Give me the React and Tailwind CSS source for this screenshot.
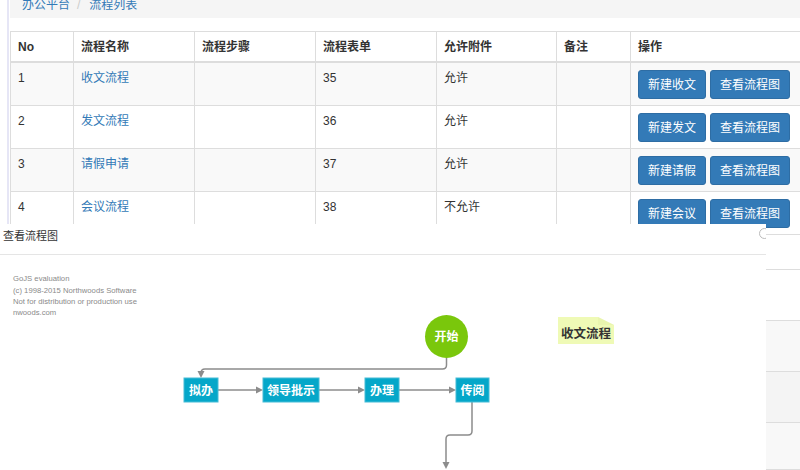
import React from "react";

const cols = [63, 121, 121, 121, 120, 74, 230];

const rows = [
  { no: "1", name: "收文流程", form: "35", att: "允许", btn: "新建收文" },
  { no: "2", name: "发文流程", form: "36", att: "允许", btn: "新建发文" },
  { no: "3", name: "请假申请", form: "37", att: "允许", btn: "新建请假" },
  { no: "4", name: "会议流程", form: "38", att: "不允许", btn: "新建会议" },
];

const extra = [
  { h: "h-[35px]", bg: "bg-white" },
  { h: "h-[51px]", bg: "bg-white" },
  { h: "h-[51px]", bg: "bg-[#f8f8f8]" },
  { h: "h-[51px]", bg: "bg-[#f4f4f4]" },
  { h: "h-[47px]", bg: "bg-[#f8f8f8]" },
];

function Cell({ i, children, className = "" }) {
  return (
    <div
      style={{ width: cols[i] }}
      className={`shrink-0 border-r border-[#ddd] px-[7px] pt-[7px] leading-[17px] ${className}`}
    >
      {children}
    </div>
  );
}

function Btn({ children }) {
  return (
    <button className="h-[29px] px-[9px] pt-[1px] rounded-[3px] border border-[#2e6da4] bg-[#337ab7] text-white text-[12px] leading-[17px] whitespace-nowrap">
      {children}
    </button>
  );
}

function Diagram() {
  const font = "'Noto Sans CJK SC', 'Liberation Sans', sans-serif";
  const grey = "#8c8c8c";
  const arrow = (x, y, dir) => {
    if (dir === "right")
      return <polygon points={`${x},${y} ${x - 7},${y - 3.5} ${x - 7},${y + 3.5}`} fill={grey} />;
    return <polygon points={`${x},${y} ${x - 3.5},${y - 7} ${x + 3.5},${y - 7}`} fill={grey} />;
  };
  const box = (x1, x2, label) => (
    <g key={label}>
      <rect x={x1} y={378} width={x2 - x1} height={24} fill="#05a7c9" stroke="#46bcd6" strokeWidth="1" />
      <text x={(x1 + x2) / 2} y={394.5} textAnchor="middle" fill="#fff" fontSize="12" fontWeight="700" fontFamily={font}>
        {label}
      </text>
    </g>
  );
  return (
    <svg width="766" height="215" viewBox="0 255 766 215" className="block">
      <g fontFamily="'Liberation Sans', Arial, sans-serif" fontSize="7.7" fill="#8a8a8a">
        <text x="13" y="281">GoJS evaluation</text>
        <text x="13" y="292.5">(c) 1998-2015 Northwoods Software</text>
        <text x="13" y="304">Not for distribution or production use</text>
        <text x="13" y="315">nwoods.com</text>
      </g>

      <g stroke={grey} strokeWidth="1.5" fill="none">
        <path d="M446.5 358 V365 Q446.5 369 442.5 369 H205 Q201 369 201 373 V372" />
        <path d="M218 390 H257" />
        <path d="M319 390 H359" />
        <path d="M399 390 H450" />
        <path d="M472 402 V431 Q472 435 468 435 H450 Q446 435 446 439 V462" />
      </g>
      {arrow(201, 378, "down")}
      {arrow(263, 390, "right")}
      {arrow(365, 390, "right")}
      {arrow(456, 390, "right")}
      {arrow(446, 469, "down")}

      <circle cx="446.5" cy="336.5" r="21.5" fill="#7ac70c" />
      <text x="446.5" y="341" textAnchor="middle" fill="#fff" fontSize="12" fontWeight="700" fontFamily={font}>
        开始
      </text>

      {box(184, 218, "拟办")}
      {box(263, 319, "领导批示")}
      {box(365, 399, "办理")}
      {box(456, 489, "传阅")}

      <polygon points="558,317 598,317 614,325 614,344 558,344" fill="#effab6" />
      <polygon points="598,317 614,325 598,325" fill="#e4f0a6" opacity="0.5" />
      <text x="586" y="337.5" textAnchor="middle" fill="#333" fontSize="12.5" fontWeight="700" fontFamily={font}>
        收文流程
      </text>
    </svg>
  );
}

export default function App() {
  return (
    <div className="relative w-[800px] h-[470px] overflow-hidden bg-white text-[12px] text-[#333] font-['Liberation_Sans','Noto_Sans_CJK_SC',sans-serif]">
      <div className="flex">
        <div className="w-[7px] shrink-0" />
        <div className="w-[2px] shrink-0 bg-[#e6e6f6] h-[470px]" />
        <div className="w-[1px] shrink-0" />
        <div className="flex-1 min-w-0">
          <div className="h-[18px] overflow-hidden bg-[#f5f5f5] pl-[12px] text-[12px]">
            <div className="-mt-[3px] leading-[17px] whitespace-nowrap">
              <span className="text-[#337ab7]">办公平台</span>
              <span className="text-[#ccc] ml-[7px] mr-[9px]">/</span>
              <span className="text-[#337ab7]">流程列表</span>
            </div>
          </div>

          <div className="mt-[13px] w-[850px] border-t border-l border-[#ddd]">
            <div className="flex h-[31px] border-b-2 border-[#ddd] font-bold">
              <Cell i={0}>No</Cell>
              <Cell i={1}>流程名称</Cell>
              <Cell i={2}>流程步骤</Cell>
              <Cell i={3}>流程表单</Cell>
              <Cell i={4}>允许附件</Cell>
              <Cell i={5}>备注</Cell>
              <Cell i={6}>操作</Cell>
            </div>
            {rows.map((r, idx) => (
              <div
                key={r.no}
                className={`flex h-[43px] border-b border-[#ddd] ${idx % 2 === 0 ? "bg-[#f9f9f9]" : "bg-white"}`}
              >
                <Cell i={0}>{r.no}</Cell>
                <Cell i={1}>
                  <span className="text-[#337ab7]">{r.name}</span>
                </Cell>
                <Cell i={2}></Cell>
                <Cell i={3}>{r.form}</Cell>
                <Cell i={4}>{r.att}</Cell>
                <Cell i={5}></Cell>
                <Cell i={6} className="flex gap-[4px] items-start">
                  <Btn>{r.btn}</Btn>
                  <Btn>查看流程图</Btn>
                </Cell>
              </div>
            ))}
            {extra.map((e, idx) => (
              <div key={idx} className={`flex ${e.h} ${e.bg} border-b border-[#ddd]`}>
                {cols.map((w, i) => (
                  <div key={i} style={{ width: w }} className="shrink-0 border-r border-[#ddd]" />
                ))}
              </div>
            ))}
          </div>
        </div>
      </div>

      <div className="absolute left-0 top-[224px] w-[766px] h-[246px] bg-white overflow-hidden">
        <div className="relative h-[31px] border-b border-[#e5e5e5] pl-[3px] pt-[3px]">
          <span className="text-[11px] leading-[17px] text-[#333] font-['Noto_Sans_CJK_SC',sans-serif]">查看流程图</span>
          <div className="absolute left-[759px] top-[4px] w-[11px] h-[11px] rounded-full border border-[#bbb] bg-white" />
        </div>
        <Diagram />
      </div>
    </div>
  );
}
